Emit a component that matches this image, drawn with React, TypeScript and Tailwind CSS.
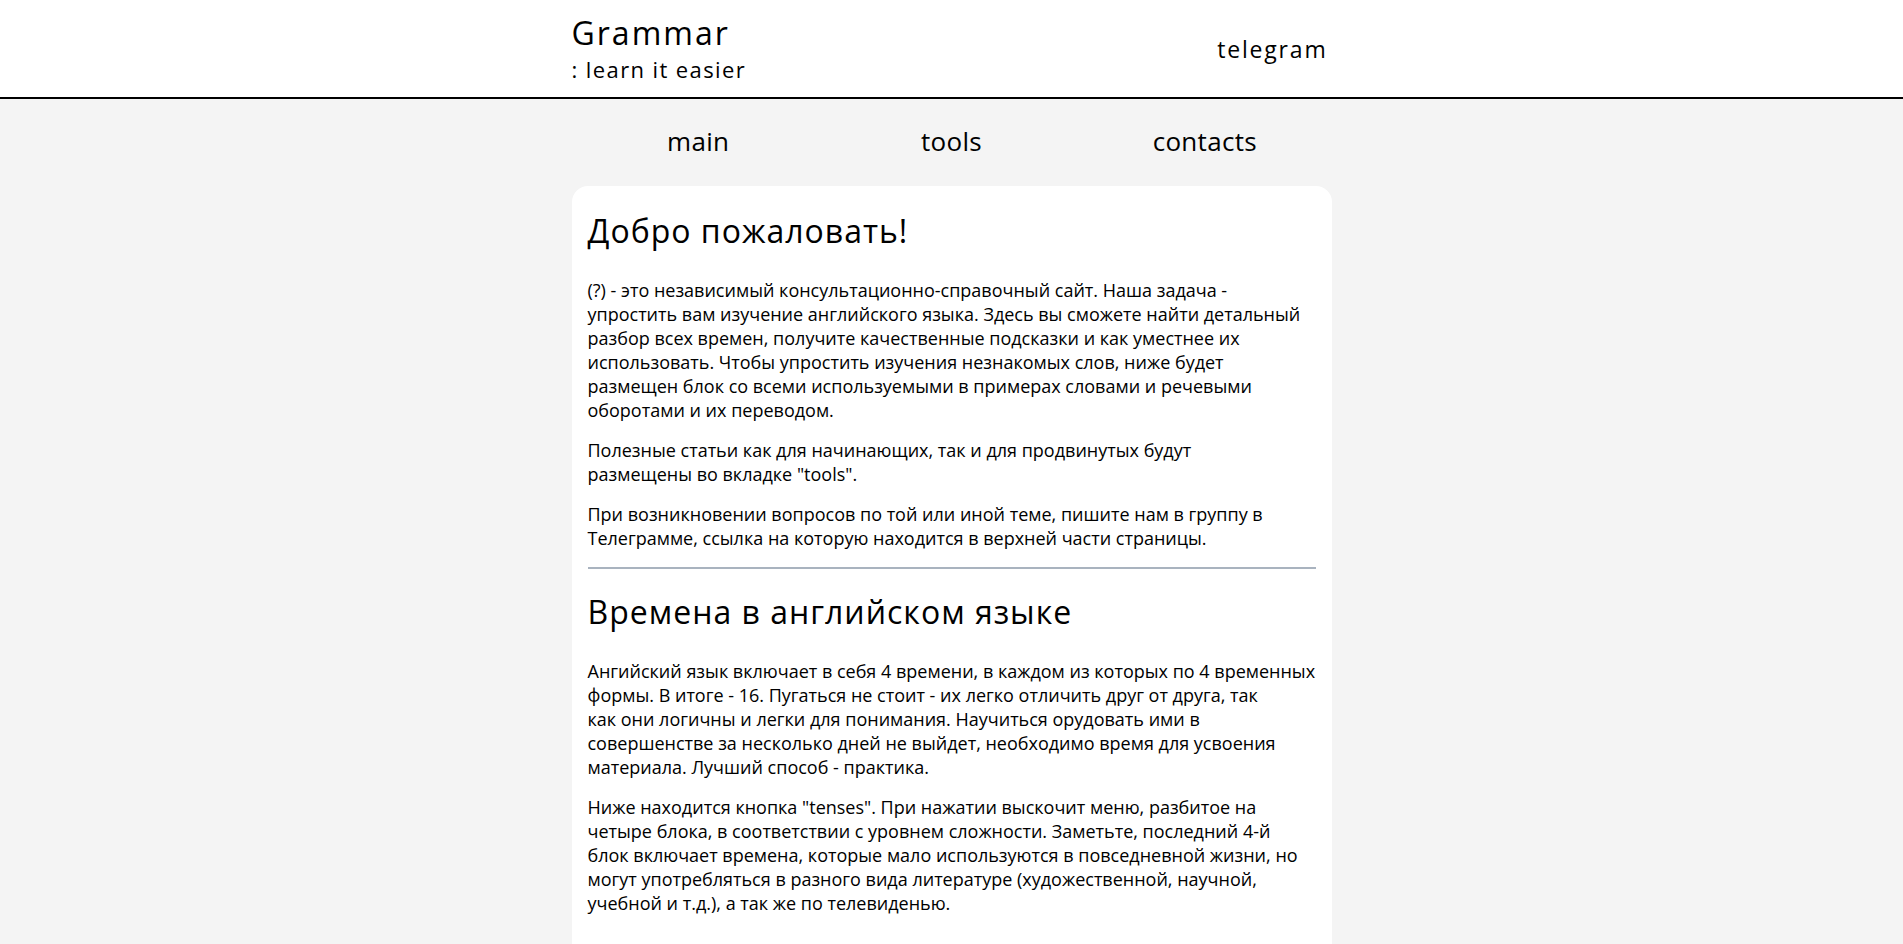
import React from "react";

const welcome: string[][] = [
  [
    "(?) - это независимый консультационно-справочный сайт. Наша задача -",
    "упростить вам изучение английского языка. Здесь вы сможете найти детальный",
    "разбор всех времен, получите качественные подсказки и как уместнее их",
    "использовать. Чтобы упростить изучения незнакомых слов, ниже будет",
    "размещен блок со всеми используемыми в примерах словами и речевыми",
    "оборотами и их переводом.",
  ],
  [
    "Полезные статьи как для начинающих, так и для продвинутых будут",
    "размещены во вкладке \"tools\".",
  ],
  [
    "При возникновении вопросов по той или иной теме, пишите нам в группу в",
    "Телеграмме, ссылка на которую находится в верхней части страницы.",
  ],
];

const tenses: string[][] = [
  [
    "Ангийский язык включает в себя 4 времени, в каждом из которых по 4 временных",
    "формы. В итоге - 16. Пугаться не стоит - их легко отличить друг от друга, так",
    "как они логичны и легки для понимания. Научиться орудовать ими в",
    "совершенстве за несколько дней не выйдет, необходимо время для усвоения",
    "материала. Лучший способ - практика.",
  ],
  [
    "Ниже находится кнопка \"tenses\". При нажатии выскочит меню, разбитое на",
    "четыре блока, в соответствии с уровнем сложности. Заметьте, последний 4-й",
    "блок включает времена, которые мало используются в повседневной жизни, но",
    "могут употребляться в разного вида литературе (художественной, научной,",
    "учебной и т.д.), а так же по телевиденью.",
  ],
];

function Section({ title, paras }: { title: string; paras: string[][] }) {
  return (
    <section>
      <h2 className="text-[32px] leading-[40px] tracking-[1px] text-black">{title}</h2>
      <div className="mt-[27px] flex flex-col gap-4">
        {paras.map((p, i) => (
          <p key={i} className="text-[18px] leading-[24px] text-black">
            {p.map((line, j) => (
              <span key={j} className="block whitespace-nowrap">
                {line}
              </span>
            ))}
          </p>
        ))}
      </div>
    </section>
  );
}

export default function App() {
  return (
    <div className="min-h-screen bg-[#f4f4f4] font-['Open_Sans',sans-serif] text-black">
      <header className="h-[99px] border-b-2 border-black bg-white">
        <div className="mx-auto flex w-[760px] items-start justify-between">
          <div className="flex flex-col pt-[17px]">
            <span className="text-[32px] leading-[32px] tracking-[2px]">Grammar</span>
            <span className="mt-[9px] text-[22px] leading-[22px] tracking-[1.4px]">: learn it easier</span>
          </div>
          <a href="#" className="mr-[4px] mt-[38px] text-[23px] leading-[23px] tracking-[1.8px]">
            telegram
          </a>
        </div>
      </header>

      <nav className="mx-auto grid w-[760px] grid-cols-3 pt-[29px] text-center">
        <a href="#" className="text-[26px] leading-[26px] tracking-[0.3px]">main</a>
        <a href="#" className="text-[26px] leading-[26px] tracking-[0.3px]">tools</a>
        <a href="#" className="text-[26px] leading-[26px] tracking-[0.3px]">contacts</a>
      </nav>

      <main className="mx-auto mt-[32px] w-[760px] rounded-2xl bg-white px-4 pb-12 pt-[25px]">
        <Section title="Добро пожаловать!" paras={welcome} />
        <hr className="mt-[17px] border-0 border-t-2 border-[#a9b3bf]" />
        <div className="mt-[23px]">
          <Section title="Времена в английском языке" paras={tenses} />
        </div>
      </main>
    </div>
  );
}
